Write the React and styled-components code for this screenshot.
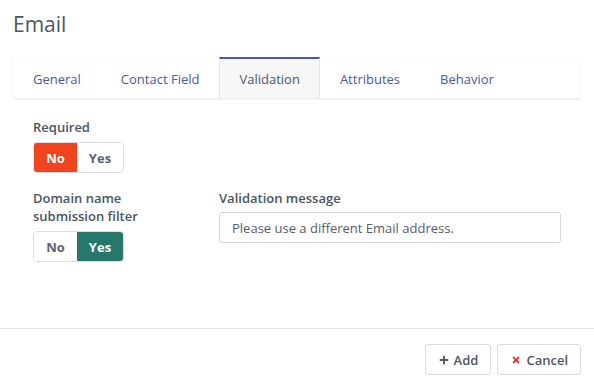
import React, { useState } from "react";
import styled, { createGlobalStyle } from "styled-components";
import { FaPlus, FaTimes } from "react-icons/fa";

const GlobalStyle = createGlobalStyle`
  html, body {
    margin: 0;
    padding: 0;
    background: #fff;
    font-family: "Open Sans", "Noto Sans", sans-serif;
  }
`;

const Page = styled.div`
  height: 390px;
  display: flex;
  flex-direction: column;
  box-sizing: border-box;
`;

const Main = styled.div`
  flex: 1;
  padding: 11px 13px 0;
`;

const Title = styled.h1`
  margin: 0;
  font-size: 21px;
  line-height: 26px;
  font-weight: 400;
  color: #4b5866;
`;

const TabBar = styled.div`
  margin-top: 20px;
  height: 41px;
  display: flex;
  background: #fff;
  box-shadow: 0 1px 2px rgba(0, 0, 0, 0.1), 0 0 1px rgba(0, 0, 0, 0.06);
`;

const Tab = styled.button`
  border: 1px solid transparent;
  border-bottom: none;
  border-top: 2px solid transparent;
  background: transparent;
  padding: 0 19px;
  font-family: inherit;
  font-size: 13px;
  color: #4a59a6;
  cursor: pointer;

  &.active {
    background: #f7f7f8;
    border-color: #e6e6e6;
    border-top-color: #4a56a2;
    color: #4b5866;
  }
`;

const Form = styled.div`
  padding: 20px 20px 0;
  display: flex;
  flex-direction: column;
  gap: 16px;
`;

const Row = styled.div`
  display: flex;
`;

const Col = styled.div`
  width: ${(p) => (p.$width ? `${p.$width}px` : "auto")};
  flex: ${(p) => (p.$width ? "none" : "1")};
  display: flex;
  flex-direction: column;
  align-items: flex-start;
`;

const Label = styled.label`
  font-size: 13px;
  line-height: 18px;
  font-weight: 600;
  color: #4b5560;
  margin-bottom: ${(p) => p.$gap || 6}px;
`;

const Toggle = styled.div`
  display: flex;
  height: 31px;
  border: 1px solid #dedede;
  border-radius: 4px;
  box-sizing: border-box;
  overflow: hidden;
`;

const ToggleBtn = styled.button`
  border: none;
  width: ${(p) => p.$width}px;
  padding: 0;
  font-family: inherit;
  font-size: 13px;
  font-weight: 700;
  background: ${(p) => (p.$on ? p.$color : "#fff")};
  color: ${(p) => (p.$on ? "#fff" : "#5a6470")};
  cursor: pointer;
`;

const Input = styled.input`
  width: 342px;
  height: 31px;
  box-sizing: border-box;
  border: 1px solid #d6d6d6;
  border-radius: 3px;
  padding: 0 12px;
  font-family: inherit;
  font-size: 13px;
  color: #545e69;
  outline: none;
`;

const Footer = styled.div`
  border-top: 1px solid #e4e4e4;
  padding: 15px 13px 15px;
  display: flex;
  justify-content: flex-end;
  gap: 6px;
`;

const Button = styled.button`
  height: 31px;
  display: flex;
  align-items: center;
  gap: 5px;
  padding: 0 12px 0 13px;
  border: 1px solid #dcdcdc;
  border-radius: 3px;
  background: #fff;
  font-family: inherit;
  font-size: 13px;
  font-weight: 600;
  color: #4b5866;
  cursor: pointer;

  svg {
    color: ${(p) => p.$iconColor || "#4b5866"};
  }
`;

const Switch = ({ value, onChange, color }) => (
  <Toggle>
    <ToggleBtn $width={43} $on={!value} $color={color} onClick={() => onChange(false)}>
      No
    </ToggleBtn>
    <ToggleBtn $width={46} $on={value} $color={color} onClick={() => onChange(true)}>
      Yes
    </ToggleBtn>
  </Toggle>
);

const tabs = ["General", "Contact Field", "Validation", "Attributes", "Behavior"];

export default function App() {
  const [active, setActive] = useState("Validation");
  const [required, setRequired] = useState(false);
  const [filter, setFilter] = useState(true);
  const [msg, setMsg] = useState("Please use a different Email address.");

  return (
    <Page>
      <GlobalStyle />
      <Main>
        <Title>Email</Title>
        <TabBar>
          {tabs.map((t) => (
            <Tab key={t} className={t === active ? "active" : ""} onClick={() => setActive(t)}>
              {t}
            </Tab>
          ))}
        </TabBar>
        <Form>
          <Row>
            <Col $width={186}>
              <Label>Required</Label>
              <Switch value={required} onChange={setRequired} color="#f2431c" />
            </Col>
          </Row>
          <Row>
            <Col $width={186}>
              <Label>
                Domain name
                <br />
                submission filter
              </Label>
              <Switch value={filter} onChange={setFilter} color="#26796a" />
            </Col>
            <Col>
              <Label $gap={5}>Validation message</Label>
              <Input value={msg} onChange={(e) => setMsg(e.target.value)} />
            </Col>
          </Row>
        </Form>
      </Main>
      <Footer>
        <Button>
          <FaPlus size={10} />
          Add
        </Button>
        <Button $iconColor="#ea2a2a">
          <FaTimes size={10} />
          Cancel
        </Button>
      </Footer>
    </Page>
  );
}
